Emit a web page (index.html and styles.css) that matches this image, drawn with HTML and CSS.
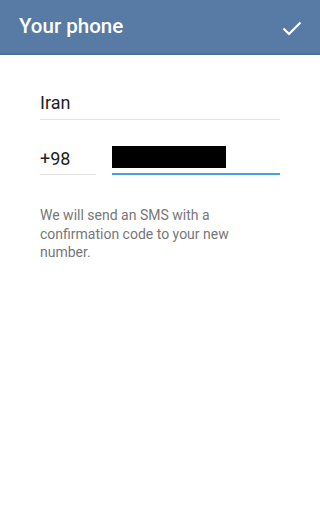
FILE: index.html
```html
<!DOCTYPE html>
<html>
<head>
<meta charset="utf-8">
<link rel="stylesheet" href="styles.css">
</head>
<body>
<div class="header">
  <div class="title">Your phone</div>
  <svg class="check" width="24" height="24" viewBox="0 0 24 24"><path d="M3.5 12.5 L9 18 L20.5 6.5" fill="none" stroke="#fff" stroke-width="2.2"/></svg>
</div>
<div class="content">
  <div class="country">Iran</div>
  <div class="phone-row">
    <div class="code">+98</div>
    <div class="number"><div class="redact"></div></div>
  </div>
  <p class="info">We will send an SMS with a confirmation code to your new number.</p>
</div>
</body>
</html>
```
FILE: styles.css
```css
html, body { margin: 0; padding: 0; background: #fff; }
body { width: 320px; height: 508px; overflow: hidden; font-family: Roboto, "Noto Sans", sans-serif; }
.header {
  height: 53px;
  background: #587ba5;
  border-bottom: 2px solid #4f6f95;
  display: flex;
  align-items: center;
  justify-content: space-between;
  padding: 0 16px 0 19px;
}
.title { color: #fff; font-size: 20.5px; font-weight: 500; padding-bottom: 1px; }
.check { display: block; margin-top: 2px; }
.content { padding: 0 40px; }
.country {
  margin-top: 36px;
  font-size: 18px;
  color: #222;
  height: 28px;
  line-height: 24px;
  border-bottom: 1px solid #e3e3e3;
}
.phone-row { display: flex; margin-top: 27px; gap: 16px; }
.code {
  width: 56px;
  font-size: 18px;
  color: #222;
  line-height: 24px;
  height: 27px;
  border-bottom: 1px solid #e3e3e3;
}
.number {
  flex: 1;
  height: 26px;
  border-bottom: 2px solid #4a9ee6;
}
.redact { width: 114px; height: 22px; background: #000; margin-top: -1px; }
.info {
  margin: 31px 0 0;
  font-size: 14px;
  line-height: 18.5px;
  color: #777;
}
```
